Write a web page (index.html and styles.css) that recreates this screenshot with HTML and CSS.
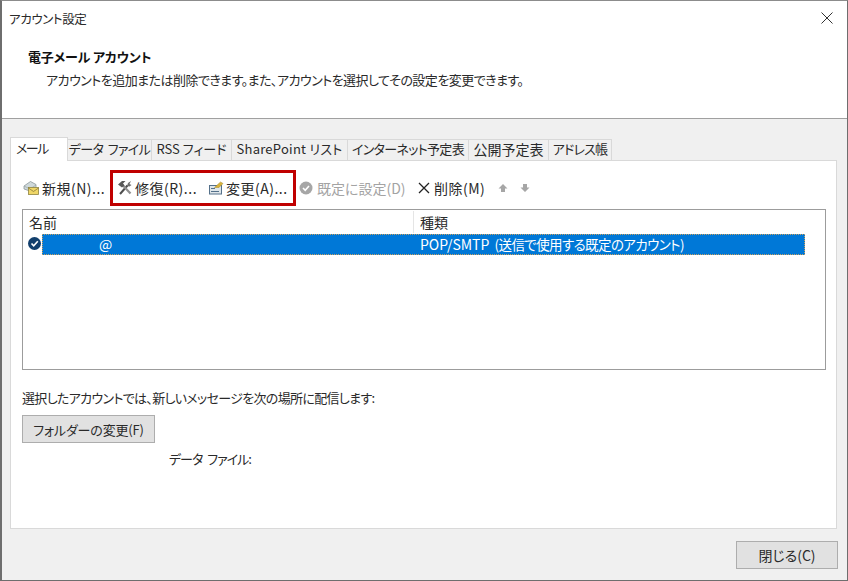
FILE: index.html
```html
<!DOCTYPE html>
<html lang="ja">
<head>
<meta charset="utf-8">
<title>アカウント設定</title>
<link rel="stylesheet" href="styles.css">
</head>
<body>
<div class="window">
  <header class="titlebar">
    <span class="title">アカウント設定</span>
    <svg class="close" width="12" height="12" viewBox="0 0 12 12"><path d="M.5.5l11 11M11.500.5l-11 11" stroke="#333" fill="none"/></svg>
  </header>
  <section class="intro">
    <h1>電子メール アカウント</h1>
    <p>アカウントを追加または削除できます。また、アカウントを選択してその設定を変更できます。</p>
  </section>
  <main class="body">
    <nav class="tabs">
      <span class="tab active">メール</span>
      <span class="tab t1">データ ファイル</span>
      <span class="tab t2">RSS フィード</span>
      <span class="tab t3">SharePoint リスト</span>
      <span class="tab t4">インターネット予定表</span>
      <span class="tab t5">公開予定表</span>
      <span class="tab t6">アドレス帳</span>
    </nav>
    <div class="panel">
      <div class="toolbar">
        <span class="tool new">
          <svg width="16" height="16" viewBox="0 0 16 16"><path d="M1 6 7.500 1.500 13 4.500V9L7 11 1 9z" fill="#cfd9db" stroke="#8c979b" stroke-width=".8"/><path d="M1 6l6 3 6-4" fill="none" stroke="#9aa5a8" stroke-width=".7"/><rect x="5.500" y="7.500" width="10" height="7" fill="#efd667" stroke="#8f8440" stroke-width=".8"/><path d="M5.500 8l5 3.500 5-3.500" fill="none" stroke="#8a7a38" stroke-width=".8"/></svg>
          <span>新規(N)...</span>
        </span>
        <span class="tool repair">
          <svg width="16" height="16" viewBox="0 0 16 16"><path d="M3 14 10.500 5.500" stroke="#4d4d4d" stroke-width="2"/><path d="M13.500 13.500 5.500 5" stroke="#8f8f8f" stroke-width="2.200"/><path d="M1 4.500 5 1h3.500L6 3.500 7.500 5.500 5 7.500z" fill="#595959"/><path d="M10 6 11 3l3-2-1.500 3 2 1-2 1.500z" fill="#6e6e6e"/></svg>
          <span>修復(R)...</span>
        </span>
        <span class="tool change">
          <svg width="16" height="16" viewBox="0 0 16 16"><rect x="1.500" y="5.500" width="12" height="8.500" fill="#dfe6ea" stroke="#54708a"/><path d="M3 8.500h4M3 11.500h8" stroke="#54708a"/><path d="M6.500 7.500 12.500 2 15 3.500 11 7.500z" fill="#d9b33a" stroke="#a5862a" stroke-width=".5"/></svg>
          <span>変更(A)...</span>
        </span>
        <span class="tool default">
          <svg width="14" height="14" viewBox="0 0 14 14"><circle cx="7" cy="7" r="6.500" fill="#a6a6a6"/><path d="M4 7l2.200 2.300L10 5" fill="none" stroke="#fff" stroke-width="1.600"/></svg>
          <span>既定に設定(D)</span>
        </span>
        <span class="tool delete">
          <svg width="12" height="12" viewBox="0 0 12 12"><path d="M1 1l10 10M11 1 1 11" stroke="#222" stroke-width="1.300" fill="none"/></svg>
          <span>削除(M)</span>
        </span>
        <svg class="arrow up" width="10" height="10" viewBox="0 0 10 10"><path d="M5 1 9.500 5.500H7V9H3V5.500H.5z" fill="#a6a6a6"/></svg>
        <svg class="arrow" width="10" height="10" viewBox="0 0 10 10"><path d="M5 9 9.500 4.500H7V1H3v3.500H.5z" fill="#a6a6a6"/></svg>
      </div>
      <div class="listbox">
        <div class="list-head">
          <span class="col-name">名前</span>
          <span class="col-type">種類</span>
        </div>
        <div class="list-row">
          <svg class="row-check" width="13" height="13" viewBox="0 0 13 13"><circle cx="6.500" cy="6.500" r="6.500" fill="#123f6d"/><path d="M3.500 6.500l2.200 2.300L9.800 4.300" fill="none" stroke="#fff" stroke-width="1.600"/></svg>
          <div class="row-bar">
            <span class="row-name">@</span>
            <span class="row-type">POP/SMTP <span class="row-note">(送信で使用する既定のアカウント)</span></span>
          </div>
        </div>
      </div>
      <p class="deliver">選択したアカウントでは、新しいメッセージを次の場所に配信します:</p>
      <button class="btn folder" type="button">フォルダーの変更(F)</button>
      <p class="datafile">データ ファイル:</p>
    </div>
    <div class="highlight"></div>
  </main>
  <footer class="footer">
    <button class="btn closebtn" type="button">閉じる(C)</button>
  </footer>
</div>
</body>
</html>
```
FILE: styles.css
```css
* { box-sizing: border-box; }
html, body { margin: 0; padding: 0; }
body {
  width: 848px;
  height: 581px;
  overflow: hidden;
  font-family: "Noto Sans CJK JP", "Noto Sans", sans-serif;
  font-feature-settings: "palt";
  font-size: 14px;
  color: #2a2a2a;
}
.window {
  width: 848px;
  height: 581px;
  border: 1px solid #6e6e6e;
  border-left-width: 2px;
  border-top-color: #8c8c8c;
  background: #f0f0f0;
  display: flex;
  flex-direction: column;
}
.titlebar {
  height: 35px;
  flex: none;
  background: #fff;
  display: flex;
  align-items: center;
  justify-content: space-between;
  padding: 0 14px 1px 7px;
  font-size: 12.500px;
  letter-spacing: -.4px;
}
.intro {
  height: 83px;
  flex: none;
  background: #fff;
  border-bottom: 1px solid #a0a0a0;
  padding: 11px 0 0 26px;
}
.intro h1 {
  margin: 0;
  font-size: 13px;
  line-height: 20px;
  font-weight: 700;
  letter-spacing: -.15px;
  color: #111;
}
.intro p {
  margin: 4px 0 0 18px;
  font-size: 13px;
  line-height: 18px;
  letter-spacing: -.53px;
}
.body {
  flex: none;
  position: relative;
  height: 409px;
  padding: 18px 10px 0 8px;
}
.tabs {
  display: flex;
  height: 23px;
  align-items: flex-end;
  position: relative;
}
.tab {
  height: 21px;
  line-height: 18px;
  font-size: 13px;
  background: #f0f0f0;
  border: 1px solid #d9d9d9;
  border-bottom: none;
  border-left: none;
  text-align: center;
  white-space: nowrap;
}
.tab.active {
  width: 58px;
  height: 24px;
  background: #fff;
  border: 1px solid #d9d9d9;
  border-bottom: none;
  line-height: 20px;
  letter-spacing: -1.500px;
  text-align: left;
  padding-left: 5px;
  position: relative;
  z-index: 1;
  margin-bottom: -1px;
}
.t1 { width: 84px; letter-spacing: -.6px; word-spacing: 2px; }
.t2 { width: 80px; }
.t3 { width: 116px; letter-spacing: .25px; }
.t4 { width: 121px; letter-spacing: -.7px; }
.t5 { width: 80px; font-size: 14px; }
.t6 { width: 63px; letter-spacing: -.8px; }
.panel {
  height: 369px;
  background: #fff;
  border: 1px solid #d9d9d9;
  padding: 0 10px 0 11px;
}
.toolbar {
  display: flex;
  align-items: center;
  height: 48px;
  padding-top: 6px;
  font-size: 14px;
  white-space: nowrap;
}
.tool { display: inline-flex; align-items: center; gap: 2px; }
.new { width: 94px; margin-left: 1px; gap: 3px; letter-spacing: .5px; }
.repair { width: 91px; letter-spacing: .5px; }
.change { width: 90px; letter-spacing: .5px; }
.default { width: 119px; color: #a3a3a3; gap: 4px; margin-left: 1px; }
.delete { width: 80px; gap: 4px; letter-spacing: .5px; }
.arrow { margin-right: 12px; }
.listbox {
  height: 161px;
  border: 1px solid #9c9c9c;
}
.list-head {
  height: 23px;
  display: flex;
  line-height: 22px;
  font-size: 14px;
  padding-top: 1px;
}
.col-name { width: 391px; padding-left: 6px; border-right: 1px solid #e5e5e5; }
.col-type { padding-left: 6px; }
.list-row { display: flex; align-items: center; height: 22px; padding-left: 5px; gap: 1px; }
.row-check { flex: none; margin-bottom: 2px; }
.row-bar {
  flex: none;
  width: 763px;
  height: 21px;
  background: #0078d7;
  border: 1px dotted #c8a060;
  color: #fff;
  display: flex;
  line-height: 19px;
  font-size: 14px;
  white-space: nowrap;
}
.row-name { width: 377px; padding-left: 56px; }
.row-note { font-size: 13.500px; letter-spacing: -.6px; margin-left: 2px; }
.deliver {
  margin: 19px 0 0;
  font-size: 13px;
  line-height: 18px;
  letter-spacing: -.68px;
}
.btn {
  font-family: inherit;
  font-feature-settings: "palt";
  color: #2a2a2a;
  background: #e1e1e1;
  border: 1px solid #adadad;
  padding: 0;
  font-size: 14px;
  display: block;
}
.folder {
  width: 133px;
  height: 28px;
  margin: 8px 0 0 0;
  font-size: 13px;
  letter-spacing: -.15px;
}
.datafile {
  margin: 7px 0 0 147px;
  font-size: 13px;
  line-height: 18px;
  letter-spacing: -1px;
  word-spacing: 3px;
}
.highlight {
  position: absolute;
  left: 108px;
  top: 51px;
  width: 186px;
  height: 36px;
  border: 3px solid #c00000;
  pointer-events: none;
}
.footer {
  flex: 1;
  display: flex;
  justify-content: flex-end;
  align-items: flex-start;
  padding: 13px 9px 0 0;
}
.closebtn {
  width: 102px;
  height: 28px;
}
```
